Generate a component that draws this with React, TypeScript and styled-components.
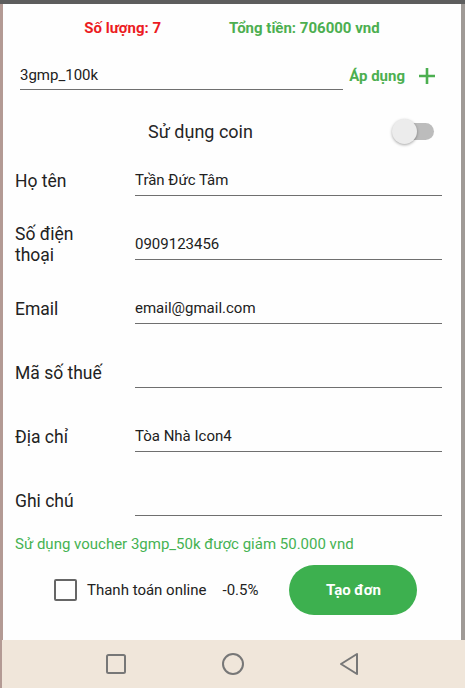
import React from "react";
import styled, { createGlobalStyle } from "styled-components";

const Global = createGlobalStyle`
  html, body { margin: 0; padding: 0; }
  body { font-family: Roboto, "Noto Sans", Arial, sans-serif; background: #a39a96; }
  * { box-sizing: border-box; }
`;

const Screen = styled.div`
  width: 465px;
  height: 688px;
  display: flex;
  flex-direction: column;
  background: linear-gradient(to right, #b39a94 0, #b39a94 3px, #9f9a96 3px, #9f9a96 100%);
  overflow: hidden;
`;

const TopStrip = styled.div`
  height: 4px;
  background: #5d5d5d;
  flex: none;
`;

const Dialog = styled.div`
  flex: 1;
  margin: 0 4px 0 3px;
  background: #fefefe;
  display: flex;
  flex-direction: column;
`;

const Header = styled.div`
  height: 40px;
  margin-top: 4px;
  display: flex;
  align-items: center;
  justify-content: center;
  gap: 68px;
  font-size: 15px;
  font-weight: 700;
`;

const Stat = styled.span<{ $color: string }>`
  color: ${(p) => p.$color};
`;

const VoucherRow = styled.div`
  display: flex;
  align-items: center;
  margin-top: 13px;
  padding: 0 26px 0 17px;
`;

const UnderlineInput = styled.div`
  flex: 1;
  height: 29px;
  border-bottom: 1px solid #6f6f6f;
  display: flex;
  align-items: center;
  padding-bottom: 1px;
  font-size: 15px;
  color: #212121;
`;

const ApplyText = styled.span`
  color: #4caf50;
  font-weight: 700;
  font-size: 15px;
  margin-left: 6px;
`;

const PlusIcon = styled.svg`
  margin-left: 14px;
  width: 16px;
  height: 16px;
  flex: none;
`;

const CoinRow = styled.div`
  display: flex;
  align-items: center;
  height: 35px;
  margin-top: 24px;
  padding: 0 27px 0 6px;
`;

const CoinLabel = styled.span`
  flex: 1;
  text-align: center;
  font-size: 18px;
  color: #262626;
`;

const Switch = styled.div`
  position: relative;
  width: 42px;
  height: 26px;
  flex: none;
`;

const Track = styled.div`
  position: absolute;
  left: 7px;
  right: 0;
  top: 4px;
  height: 17px;
  border-radius: 9px;
  background: #bcbcbc;
`;

const Thumb = styled.div`
  position: absolute;
  left: 0;
  top: 0;
  width: 25px;
  height: 25px;
  border-radius: 50%;
  background: #ececec;
  box-shadow: 0 1px 3px rgba(0, 0, 0, 0.35);
`;

const Form = styled.div`
  display: flex;
  flex-direction: column;
`;

const Field = styled.div`
  height: 64px;
  display: flex;
  align-items: center;
  padding: 0 19px 0 12px;
`;

const Label = styled.div`
  width: 120px;
  padding-right: 30px;
  font-size: 17.5px;
  line-height: 21px;
  color: #222;
  flex: none;
`;

const Note = styled.div`
  height: 20px;
  margin-top: 1px;
  padding-left: 12px;
  font-size: 15px;
  line-height: 20px;
  color: #45b252;
`;

const BottomRow = styled.div`
  display: flex;
  align-items: center;
  margin-top: 11px;
  padding-left: 51px;
`;

const Checkbox = styled.div`
  width: 23px;
  height: 22px;
  border: 2px solid #666;
  border-radius: 2px;
  flex: none;
`;

const CheckText = styled.span`
  margin-left: 10px;
  font-size: 15px;
  color: #222;
`;

const Percent = styled.span`
  margin-left: 16px;
  font-size: 15px;
  color: #222;
`;

const CreateButton = styled.button`
  margin-left: 31px;
  width: 128px;
  height: 50px;
  border: none;
  border-radius: 25px;
  background: #3db04f;
  color: #fff;
  font-family: Roboto, Arial, sans-serif;
  font-size: 15px;
  font-weight: 700;
`;

const NavBar = styled.div`
  height: 48px;
  flex: none;
  margin-left: 2px;
  background: #f0e6da;
  display: flex;
  align-items: center;
  justify-content: space-between;
  padding: 0 104px 0 102px;
`;

const NavIcon = styled.svg`
  width: 24px;
  height: 24px;
  display: block;
`;

const fields: { label: string; value: string }[] = [
  { label: "Họ tên", value: "Trần Đức Tâm" },
  { label: "Số điện thoại", value: "0909123456" },
  { label: "Email", value: "email@gmail.com" },
  { label: "Mã số thuế", value: "" },
  { label: "Địa chỉ", value: "Tòa Nhà Icon4" },
  { label: "Ghi chú", value: "" },
];

export default function App() {
  return (
    <Screen>
      <Global />
      <TopStrip />
      <Dialog>
        <Header>
          <Stat $color="#ec1b23">Số lượng: 7</Stat>
          <Stat $color="#4caf50">Tổng tiền: 706000 vnd</Stat>
        </Header>
        <VoucherRow>
          <UnderlineInput>3gmp_100k</UnderlineInput>
          <ApplyText>Áp dụng</ApplyText>
          <PlusIcon viewBox="0 0 16 16">
            <path d="M8 0v16M0 8h16" stroke="#4caf50" strokeWidth="2.6" />
          </PlusIcon>
        </VoucherRow>
        <CoinRow>
          <CoinLabel>Sử dụng coin</CoinLabel>
          <Switch>
            <Track />
            <Thumb />
          </Switch>
        </CoinRow>
        <Form>
          {fields.map((f) => (
            <Field key={f.label}>
              <Label>{f.label}</Label>
              <UnderlineInput>{f.value}</UnderlineInput>
            </Field>
          ))}
        </Form>
        <Note>Sử dụng voucher 3gmp_50k được giảm 50.000 vnd</Note>
        <BottomRow>
          <Checkbox />
          <CheckText>Thanh toán online</CheckText>
          <Percent>-0.5%</Percent>
          <CreateButton>Tạo đơn</CreateButton>
        </BottomRow>
      </Dialog>
      <NavBar>
        <NavIcon viewBox="0 0 24 24">
          <rect x="3" y="3" width="18" height="18" rx="1.5" fill="none" stroke="#777" strokeWidth="2" />
        </NavIcon>
        <NavIcon viewBox="0 0 24 24">
          <circle cx="12" cy="12" r="10" fill="none" stroke="#777" strokeWidth="2" />
        </NavIcon>
        <NavIcon viewBox="0 0 24 24">
          <path d="M20 2 L4 12 L20 22 Z" fill="none" stroke="#777" strokeWidth="2" strokeLinejoin="round" />
        </NavIcon>
      </NavBar>
    </Screen>
  );
}
